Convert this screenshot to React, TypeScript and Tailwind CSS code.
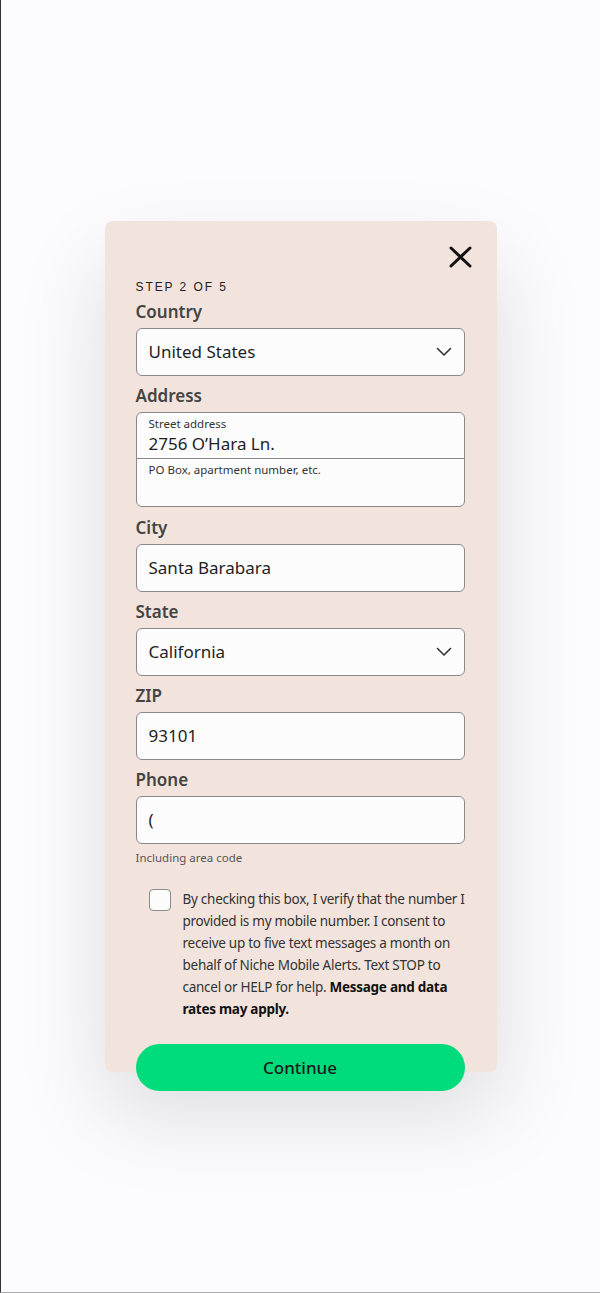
import { useState } from "react";

const sans = "font-['Noto_Sans',sans-serif]";

function Chevron() {
  return (
    <svg width="16" height="10" viewBox="0 0 16 10" fill="none" aria-hidden>
      <path d="M1.5 1.5L8 8L14.5 1.5" stroke="#333" strokeWidth="1.6" strokeLinecap="round" strokeLinejoin="round" />
    </svg>
  );
}

function Label({ children }: { children: React.ReactNode }) {
  return <div className="text-[17px] leading-6 font-semibold text-[#444] mb-1">{children}</div>;
}

function Field({ value, select }: { value: string; select?: boolean }) {
  return (
    <div className="h-12 flex items-center justify-between rounded-md border border-[#8a8a8a] bg-[#fdfcfd] pl-3 pr-3">
      <span className="text-[17px] text-[#1f1f1f]">{value}</span>
      {select && <Chevron />}
    </div>
  );
}

function App() {
  const [checked, setChecked] = useState(false);

  return (
    <div className={`min-h-[1293px] bg-[#fcfbfd] border-l border-[#333] border-b border-b-[#aaa] ${sans}`}>
      <div className="pt-[221px] flex justify-center">
        <div className="w-[392px] rounded-lg bg-[#f2e4dc] shadow-[0_40px_90px_rgba(0,0,0,0.13)] pl-[31px] pr-[32px] pt-6 flex flex-col">
          {/* close */}
          <div className="flex justify-end mr-[-8px]">
            <button aria-label="Close" className="w-6 h-6 flex items-center justify-center">
              <svg width="23" height="22" viewBox="0 0 23 22" aria-hidden>
                <path d="M2 2L21 20M21 2L2 20" stroke="#111" strokeWidth="3" strokeLinecap="round" />
              </svg>
            </button>
          </div>

          <div className="mt-[10px] mb-[5px] text-[12px] leading-4 tracking-[0.16em] font-['Liberation_Sans',sans-serif] text-[#222]">
            STEP 2 OF 5
          </div>

          <Label>Country</Label>
          <Field value="United States" select />

          <div className="mt-2">
            <Label>Address</Label>
            <div className="rounded-md border border-[#8a8a8a] bg-[#fdfcfd]">
              <div className="h-[46px] px-3 pt-[3px] border-b border-[#8a8a8a]">
                <div className="text-[11.5px] leading-4 text-[#333]">Street address</div>
                <div className="text-[17px] leading-6 text-[#1f1f1f]">2756 O’Hara Ln.</div>
              </div>
              <div className="h-[47px] px-3 pt-[3px]">
                <div className="text-[11.5px] leading-4 text-[#333]">PO Box, apartment number, etc.</div>
              </div>
            </div>
          </div>

          <div className="mt-[9px]">
            <Label>City</Label>
            <Field value="Santa Barabara" />
          </div>

          <div className="mt-2">
            <Label>State</Label>
            <Field value="California" select />
          </div>

          <div className="mt-2">
            <Label>ZIP</Label>
            <Field value="93101" />
          </div>

          <div className="mt-2">
            <Label>Phone</Label>
            <Field value="(" />
          </div>

          <div className="mt-[6px] text-[11.5px] leading-4 text-[#555]">Including area code</div>

          <div className="mt-[22px] flex gap-3 pl-[13px] mr-[-2px]">
            <button
              aria-label="Consent"
              aria-pressed={checked}
              onClick={() => setChecked((c) => !c)}
              className="shrink-0 mt-[1px] w-[22px] h-[22px] rounded-[4px] border border-[#8a8a8a] bg-[#fdfcfd]"
            />
            <p className="text-[13.5px] leading-[22px] tracking-[-0.02em] text-[#333]">
              By checking this box, I verify that the number I provided is my mobile number. I consent to receive up to
              five text messages a month on behalf of Niche Mobile Alerts. Text STOP to cancel or HELP for help.{" "}
              <b className="font-bold text-[#111]">Message and data rates may apply.</b>
            </p>
          </div>

          <button className="mt-[24px] mb-[-19px] relative h-[47px] rounded-full bg-[#00dc7b] text-[17px] font-medium text-[#1a1a1a]">
            Continue
          </button>
        </div>
      </div>
    </div>
  );
}

export default App;
